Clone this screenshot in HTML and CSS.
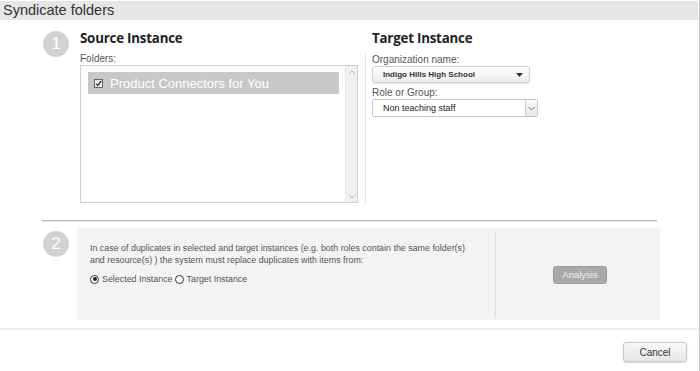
FILE: index.html
```html
<!DOCTYPE html>
<html>
<head>
<meta charset="utf-8">
<link rel="stylesheet" href="styles.css">
</head>
<body>
<div class="dialog">
  <div class="title">Syndicate folders</div>
  <div class="content">
    <div class="step1">
      <div class="num num1">1</div>
      <div class="source">
        <h2 class="heading">Source Instance</h2>
        <div class="label">Folders:</div>
        <div class="listbox">
          <div class="list-items">
            <div class="item">
              <svg class="cb" width="9" height="9" viewBox="0 0 9 9"><rect x="0.5" y="0.5" width="8" height="8" fill="#f2f2f2" stroke="#666"/><path d="M2 4.6 L3.8 6.4 L7.2 2" fill="none" stroke="#333" stroke-width="1.3"/></svg>
              <span>Product Connectors for You</span>
            </div>
          </div>
          <div class="vscroll">
            <svg width="8" height="6" viewBox="0 0 8 6"><path d="M1 5 L4 2 L7 5" fill="none" stroke="#b0b0b0" stroke-width="1"/></svg>
            <svg width="8" height="6" viewBox="0 0 8 6"><path d="M1 1 L4 4 L7 1" fill="none" stroke="#b0b0b0" stroke-width="1"/></svg>
          </div>
        </div>
      </div>
      <div class="target">
        <h2 class="heading target-heading">Target Instance</h2>
        <div class="fields">
          <div class="label">Organization name:</div>
          <div class="select select-org">
            <span>Indigo Hills High School</span>
            <svg width="7" height="4" viewBox="0 0 7 4"><path d="M0 0 L7 0 L3.5 4 Z" fill="#333"/></svg>
          </div>
          <div class="label label-role">Role or Group:</div>
          <div class="select select-role">
            <span>Non teaching staff</span>
            <span class="arrowbox"><svg width="7" height="5" viewBox="0 0 7 5"><path d="M0.5 1 L3.5 4 L6.5 1" fill="none" stroke="#777" stroke-width="1"/></svg></span>
          </div>
        </div>
      </div>
    </div>
    <div class="rule"></div>
    <div class="step2">
      <div class="num num2">2</div>
      <div class="panel">
        <div class="panel-left">
          <p class="desc">In case of duplicates in selected and target instances (e.g. both roles contain the same folder(s) and resource(s) ) the system must replace duplicates with items from:</p>
          <div class="radios">
            <span class="radio checked"></span><span class="rlabel">Selected Instance</span>
            <span class="radio"></span><span class="rlabel">Target Instance</span>
          </div>
        </div>
        <div class="panel-right">
          <button class="btn-analysis">Analysis</button>
        </div>
      </div>
    </div>
  </div>
  <div class="footer">
    <button class="btn-cancel">Cancel</button>
  </div>
</div>
</body>
</html>
```
FILE: styles.css
```css
* { box-sizing: border-box; }
html, body { margin: 0; padding: 0; background: #fff; }
body {
  width: 700px;
  height: 371px;
  overflow: hidden;
  font-family: "Liberation Sans", Arial, sans-serif;
  color: #333;
}
.dialog {
  width: 700px;
  height: 371px;
  border-right: 1px solid #c4c4c4;
  padding-top: 1px;
}
.title {
  width: 698px;
  height: 19px;
  background: #e6e6e6;
  font-size: 14.5px;
  line-height: 19px;
  padding-left: 3px;
  color: #333;
}
.content {
  padding-left: 43px;
}
.step1 {
  display: flex;
  padding-top: 9px;
}
.num {
  width: 26px;
  height: 26px;
  border-radius: 50%;
  background: #d2d2d2;
  color: #fff;
  font-size: 17px;
  line-height: 26px;
  text-align: center;
  flex: none;
}
.num1 { margin-top: 2px; }
.source {
  margin-left: 11px;
  width: 278px;
}
.heading {
  margin: 0;
  font-family: "Open Sans", sans-serif;
  font-weight: 700;
  font-size: 13.3px;
  line-height: 18px;
  color: #222;
  letter-spacing: -0.2px;
}
.label {
  font-size: 10px;
  line-height: 12px;
  color: #555;
  margin-top: 6px;
  height: 12px;
}
.listbox {
  width: 278px;
  height: 138px;
  border: 1px solid #d0d0d0;
  display: flex;
}
.list-items {
  flex: 1;
  padding: 6px 6px 0 7px;
}
.item {
  height: 22px;
  background: #c8c8c8;
  display: flex;
  align-items: center;
  padding-left: 6px;
  color: #fff;
  font-size: 13px;
}
.cb { margin-right: 7px; }
.vscroll {
  width: 12px;
  background: #f0f0f0;
  border-left: 1px solid #e6e6e6;
  display: flex;
  flex-direction: column;
  justify-content: space-between;
  align-items: center;
  padding: 3px 0 2px;
}
.target {
  margin-left: 7px;
  display: flex;
  flex-direction: column;
}
.target-heading { padding-left: 7px; }
.fields {
  flex: 1;
  margin-top: 7px;
  border-left: 1px solid #e0e0e0;
  padding-left: 6px;
}
.fields .label { margin-top: 0; height: 12px; }
.select {
  display: flex;
  align-items: center;
  border: 1px solid #cfcfcf;
  border-radius: 3px;
  background: linear-gradient(#ffffff, #ececec);
  color: #222;
}
.select-org {
  width: 158px;
  height: 17px;
  font-size: 8px;
  font-weight: bold;
  color: #333;
  padding: 0 6px 0 10px;
  justify-content: space-between;
  box-shadow: 0 1px 1px rgba(0,0,0,0.08);
}
.fields .label-role { margin-top: 4px; }
.select-role {
  width: 166px;
  height: 18px;
  font-size: 9px;
  padding-left: 10px;
  justify-content: space-between;
  border-radius: 2px;
  background: #fff;
  border-color: #c8c8c8;
}
.arrowbox {
  width: 12px;
  height: 16px;
  border-left: 1px solid #cfcfcf;
  background: linear-gradient(#fafafa, #e6e6e6);
  display: flex;
  align-items: center;
  justify-content: center;
}
.rule {
  margin-left: -1px;
  margin-top: 17px;
  width: 615px;
  height: 2px;
  border-top: 1px solid #bdbdbd;
  border-bottom: 1px solid #e2e2e2;
}
.step2 {
  display: flex;
  margin-top: 6px;
}
.num2 { margin-top: 3px; }
.panel {
  margin-left: 8px;
  width: 583px;
  height: 92px;
  background: #f3f3f3;
  display: flex;
}
.panel-left {
  width: 418px;
  padding: 15px 0 0 13px;
}
.desc {
  margin: 0;
  max-width: 385px;
  font-size: 8.9px;
  line-height: 11.5px;
  color: #555;
}
.radios {
  margin-top: 8px;
  display: flex;
  align-items: center;
  font-size: 8.9px;
  color: #555;
}
.radio {
  width: 9px;
  height: 9px;
  border: 1px solid #333;
  border-radius: 50%;
  background: #fff;
  margin-right: 3px;
  position: relative;
}
.radio.checked::after {
  content: "";
  position: absolute;
  left: 1.5px;
  top: 1.5px;
  width: 4px;
  height: 4px;
  border-radius: 50%;
  background: #222;
}
.rlabel { margin-right: 2px; }
.panel-right {
  flex: 1;
  margin: 4px 0 3px;
  border-left: 1px solid #dcdcdc;
  display: flex;
  align-items: center;
  justify-content: center;
}
.btn-analysis {
  width: 54px;
  height: 18px;
  padding: 0;
  background: #a9a9a9;
  border: 1px solid #9a9a9a;
  border-radius: 3px;
  color: #f0f0f0;
  font-family: "Liberation Sans", Arial, sans-serif;
  font-size: 9.5px;
  margin-left: 4px;
}
.footer {
  margin-top: 8px;
  border-top: 2px solid #ececec;
  display: flex;
  justify-content: flex-end;
  padding: 12px 12px 0 0;
}
.btn-cancel {
  width: 64px;
  height: 20px;
  padding: 0;
  background: linear-gradient(#f8f8f8, #e6e6e6);
  border: 1px solid #c8c8c8;
  border-radius: 3px;
  box-shadow: 0 1px 2px rgba(0,0,0,0.15);
  color: #333;
  font-family: "Liberation Sans", Arial, sans-serif;
  font-size: 10px;
}
```
